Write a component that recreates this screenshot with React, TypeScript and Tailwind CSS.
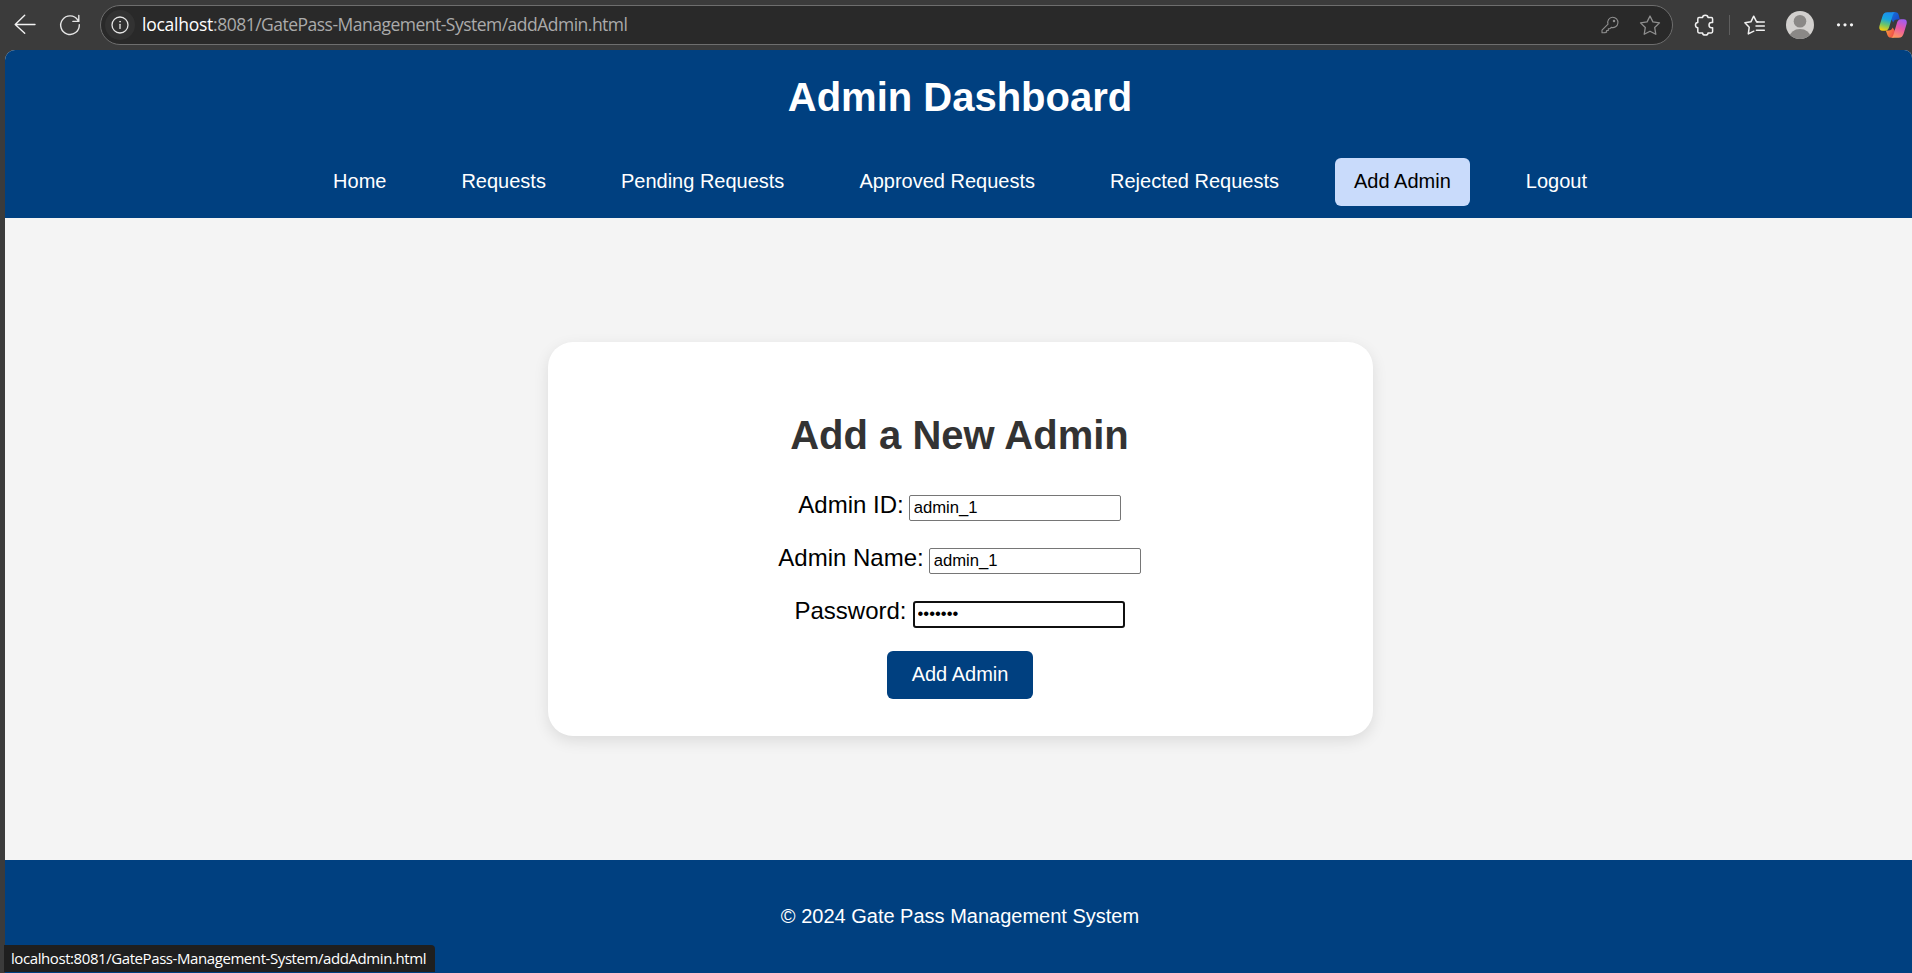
import React from "react";

const navItems = [
  { label: "Home" },
  { label: "Requests" },
  { label: "Pending Requests" },
  { label: "Approved Requests" },
  { label: "Rejected Requests" },
  { label: "Add Admin", active: true },
  { label: "Logout" },
];

const stroke = {
  fill: "none",
  strokeLinecap: "round" as const,
  strokeLinejoin: "round" as const,
};

function BackIcon() {
  return (
    <svg className="ml-[13px] size-6 shrink-0" viewBox="0 0 24 24" {...stroke} stroke="#f2f2f2" strokeWidth="1.4">
      <path d="M22 11.5H2.4M11.7 2.3L2.2 11.5L11.7 20.2" />
    </svg>
  );
}

function ReloadIcon() {
  return (
    <svg className="ml-[21px] size-6 shrink-0" viewBox="0 0 24 24" {...stroke} stroke="#e6e6e6" strokeWidth="1.4">
      <path d="M21.3 11.8A9.3 9.3 0 1 1 19.8 7.1M20.8 2.5V8.4H14.9" />
    </svg>
  );
}

function InfoIcon() {
  return (
    <svg className="size-5" viewBox="0 0 20 20" {...stroke} stroke="#e6e6e6" strokeWidth="1.3">
      <circle cx="10" cy="10" r="8" />
      <path d="M10 9.3V13.4" />
      <circle cx="10" cy="6.7" r="0.45" fill="#e6e6e6" strokeWidth="0.8" />
    </svg>
  );
}

function KeyIcon() {
  return (
    <svg className="size-5" viewBox="0 0 20 20" {...stroke} stroke="#8f8f8f" strokeWidth="1.1">
      <path d="M12.6 2.2a5.2 5.2 0 1 1-1.3 10.2L10 13.7H8.3v1.8H6.6v1.7H5.1v.6H2v-2.7l6-6A5.2 5.2 0 0 1 12.6 2.2z" />
      <circle cx="14" cy="5.9" r="0.7" fill="#8f8f8f" />
    </svg>
  );
}

function StarIcon() {
  return (
    <svg className="size-6" viewBox="0 0 24 24" {...stroke} stroke="#8f8f8f" strokeWidth="1.3">
      <path d="M12 3L14.9 8.9L21.5 9.9L16.7 14.5L17.8 21.3L12 18.2L6.2 21.3L7.3 14.5L2.5 9.9L9.1 8.9Z" />
    </svg>
  );
}

function PuzzleIcon() {
  return (
    <svg className="ml-5 size-6 shrink-0" viewBox="0 0 24 24" {...stroke} stroke="#f0f0f0" strokeWidth="1.5">
      <path d="M6 4.6H9.6C9.6 1.6 15 1.6 15 4.6H18.3Q19.6 4.6 19.6 5.9V9.4H18.4C15.2 9.4 15.2 14.8 18.4 14.8H19.6V18.6Q19.6 19.9 18.3 19.9H15C15 22.7 9.6 22.7 9.6 19.9H6Q4.8 19.9 4.8 18.6V14.8C1.7 14.8 1.7 9.4 4.8 9.4V5.9Q4.8 4.6 6 4.6Z" />
    </svg>
  );
}

function FavoritesIcon() {
  return (
    <svg className="ml-[13px] size-6 shrink-0" viewBox="0 0 24 24" {...stroke} stroke="#f0f0f0" strokeWidth="1.5">
      <path d="M14.8 8.8H13.6L10.7 3.2L7.9 8.8L1.9 9.8L6.2 14.3L5.3 20.9L10.8 18.2" />
      <path d="M14 8.9H21.3M13 13.1H21.3M13.4 17.2H21.3" />
    </svg>
  );
}

function Avatar() {
  return (
    <svg className="ml-[19px] size-7 shrink-0" viewBox="0 0 28 28">
      <clipPath id="avatar">
        <circle cx="14" cy="14" r="14" />
      </clipPath>
      <g clipPath="url(#avatar)">
        <rect width="28" height="28" fill="#d2d0ce" />
        <circle cx="14" cy="10.3" r="6.3" fill="#8a8886" />
        <ellipse cx="14" cy="26.2" rx="10.6" ry="8.2" fill="#8a8886" />
      </g>
    </svg>
  );
}

function MoreIcon() {
  return (
    <svg className="ml-[19px] size-6 shrink-0" viewBox="0 0 24 24" fill="#f5f5f5">
      <circle cx="5.5" cy="11.8" r="1.6" />
      <circle cx="12" cy="11.8" r="1.6" />
      <circle cx="18.5" cy="11.8" r="1.6" />
    </svg>
  );
}

function CopilotIcon() {
  return (
    <svg className="ml-[22px] size-7 shrink-0" viewBox="0 0 28 28">
      <defs>
        <linearGradient id="cpLeft" x1="0.6" y1="0" x2="0.35" y2="1">
          <stop offset="0" stopColor="#1b8df0" />
          <stop offset="0.4" stopColor="#18a6dc" />
          <stop offset="0.7" stopColor="#6cc56a" />
          <stop offset="1" stopColor="#f2cf12" />
        </linearGradient>
        <linearGradient id="cpRight" x1="0.7" y1="0" x2="0.3" y2="1">
          <stop offset="0" stopColor="#a35cf0" />
          <stop offset="0.45" stopColor="#e857a8" />
          <stop offset="1" stopColor="#ff9a5a" />
        </linearGradient>
        <linearGradient id="cpTop" x1="0" y1="0" x2="1" y2="1">
          <stop offset="0" stopColor="#1473d8" />
          <stop offset="1" stopColor="#1d3fc4" />
        </linearGradient>
        <linearGradient id="cpBottom" x1="0" y1="0" x2="1" y2="0.4">
          <stop offset="0" stopColor="#f9a13a" />
          <stop offset="1" stopColor="#ee4d4a" />
        </linearGradient>
      </defs>
      <path d="M13 1.2H16.5C18.6 1.2 19.3 2.4 19.8 4.2L20.8 8.4H18C15.8 8.4 14.9 9.4 14.3 11.4L12 8Z" fill="url(#cpTop)" />
      <path d="M6.8 19.6H9.6C11.8 19.6 13 18.6 13.6 16.6L16 20L15 26.6H12C9.7 26.6 8.8 25.4 8.2 23.4Z" fill="url(#cpBottom)" />
      <path d="M8.4 1.2H17C15 1.2 14.2 2.8 13.6 4.8L10.1 16.2C9.4 18.4 8.3 19.7 6 19.7H3.4C0.6 19.7 -0.2 17.6 0.5 14.8L3.4 5.4C4.3 2.6 5.6 1.2 8.4 1.2Z" fill="url(#cpLeft)" />
      <path d="M19.7 26.8H11.2C13.2 26.8 14 25.2 14.6 23.2L18 11.8C18.7 9.6 19.8 8.3 22.1 8.3H24.7C27.5 8.3 28.3 10.4 27.5 13.2L24.7 22.6C23.8 25.4 22.5 26.8 19.7 26.8Z" fill="url(#cpRight)" />
    </svg>
  );
}

function BrowserToolbar() {
  return (
    <div className="flex h-[50px] shrink-0 items-center bg-[#3b3b3b]">
      <BackIcon />
      <ReloadIcon />
      <div className="ml-[18px] flex h-10 w-[1573px] shrink-0 items-center rounded-full border border-[#6e6e6e] bg-[#292929] pl-1">
        <span className="flex size-[30px] items-center justify-center rounded-full bg-[#323232]">
          <InfoIcon />
        </span>
        <span className="ml-[7px] flex-1 whitespace-nowrap pb-0.5 font-['Open_Sans',sans-serif] text-[17.5px] leading-5 tracking-[-0.51px] text-[#ababab]">
          <span className="tracking-[-0.25px] text-white">localhost</span>:8081/GatePass-Management-System/addAdmin.html
        </span>
        <KeyIcon />
        <span className="mr-[10px] ml-[18px]">
          <StarIcon />
        </span>
      </div>
      <PuzzleIcon />
      <span className="ml-3 h-5 w-px bg-[#5e5e5e]" />
      <FavoritesIcon />
      <Avatar />
      <MoreIcon />
      <CopilotIcon />
    </div>
  );
}

function Field(props: { label: string; type: string; value: string; focused?: boolean }) {
  return (
    <label className="flex h-[53px] items-start text-[24px] leading-[26px]">
      <span className={props.focused ? "mr-[6px]" : "mr-[5px]"}>{props.label}</span>
      <input
        readOnly
        type={props.type}
        defaultValue={props.value}
        className={
          props.focused
            ? "mt-[3px] h-[27px] w-[212px] rounded-[3px] border-2 border-[#101010] bg-white px-[3px] pb-0.5 text-[16.667px] leading-5 outline-none"
            : "mt-[3px] h-[26px] w-[212px] rounded-[2px] border border-[#767676] bg-white px-1 text-[16.667px] leading-5 outline-none"
        }
      />
    </label>
  );
}

export default function App() {
  return (
    <div className="relative flex h-[973px] w-[1912px] flex-col overflow-hidden bg-[#3b3b3b] font-['Liberation_Sans',Arial,sans-serif] text-black">
      <BrowserToolbar />
      <div className="ml-[5px] flex flex-1 flex-col overflow-hidden rounded-tl-[10px] rounded-tr-[8px] bg-[#f4f4f4]">
        <header className="flex h-[168px] w-[1910px] shrink-0 flex-col items-center bg-[#004080] text-white">
          <h1 className="mt-6 text-[40px] leading-[46px] font-bold">Admin Dashboard</h1>
          <nav className="mt-[38px] flex gap-[37.5px]">
            {navItems.map((item) => (
              <a
                key={item.label}
                className={
                  item.active
                    ? "flex h-12 items-center rounded-[6px] bg-[#c9dbfb] px-[18.75px] pb-0.5 text-[20px] leading-[23px] text-black"
                    : "flex h-12 items-center px-[18.75px] pb-0.5 text-[20px] leading-[23px]"
                }
              >
                {item.label}
              </a>
            ))}
          </nav>
        </header>
        <main className="flex w-[1911px] flex-1 flex-col items-center pt-[124px]">
          <form className="flex h-[394px] w-[825px] flex-col items-center rounded-[25px] bg-white pr-[2px] shadow-[0_5px_15px_rgba(0,0,0,0.1)]">
            <h2 className="mt-[70px] mb-[58px] h-[22px] text-[40px] leading-[46px] font-bold text-[#333333]">Add a New Admin</h2>
            <Field label="Admin ID:" type="text" value="admin_1" />
            <Field label="Admin Name:" type="text" value="admin_1" />
            <Field label="Password:" type="password" value="admin_1" focused />
            <button type="button" className="h-12 w-[146px] rounded-[6px] bg-[#004080] pb-0.5 pl-px text-[20px] text-white">
              Add Admin
            </button>
          </form>
        </main>
        <footer className="flex h-[113px] w-[1910px] shrink-0 justify-center bg-[#004080] pt-[45px] text-[20px] leading-[23px] text-white">
          <p>© 2024 Gate Pass Management System</p>
        </footer>
      </div>
      <div className="absolute bottom-px left-1 flex h-[27px] w-[431px] items-center whitespace-nowrap rounded-tr-[4px] bg-[#1f1f1f] pl-[7px] font-['Open_Sans',sans-serif] text-[15px] tracking-[-0.42px] text-white">
        localhost:8081/GatePass-Management-System/addAdmin.html
      </div>
    </div>
  );
}
